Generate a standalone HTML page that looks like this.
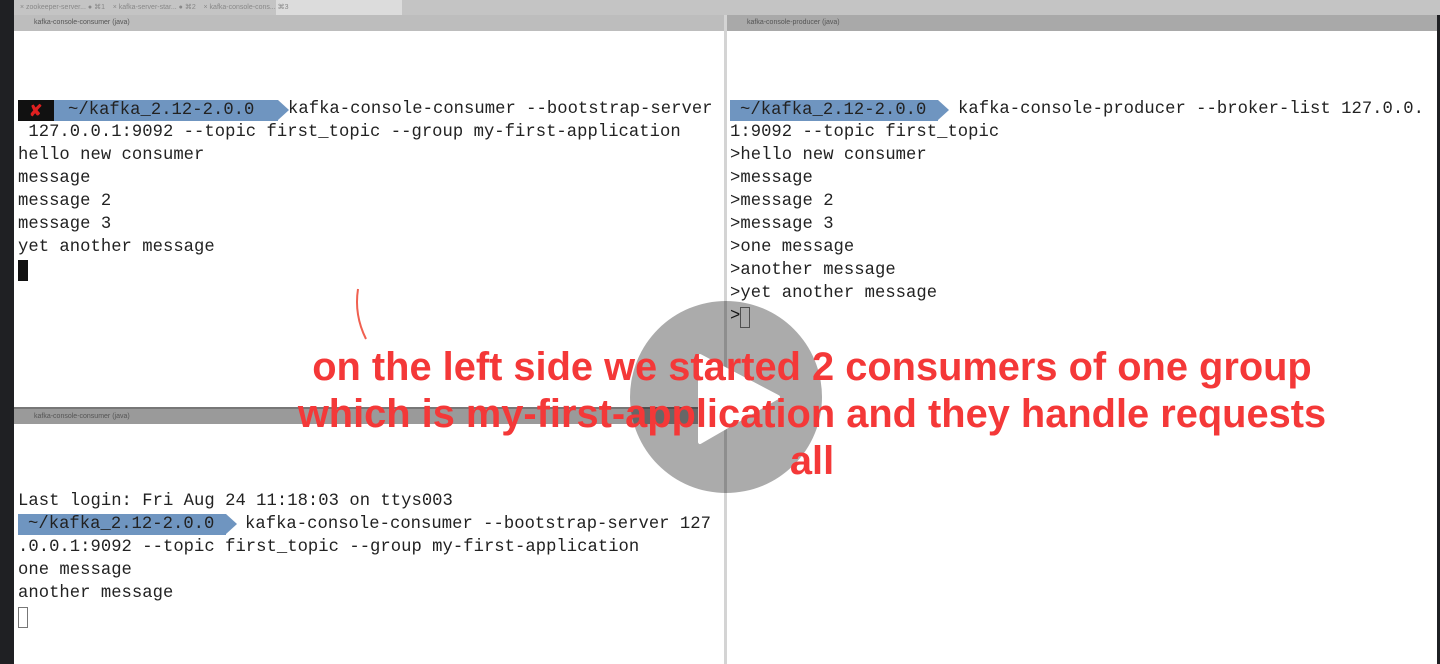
<!DOCTYPE html>
<html><head><style>
body{margin:0;width:1440px;height:664px;overflow:hidden;background:#1f2023;position:relative;font-family:"Liberation Mono",monospace}
.abs{position:absolute}
.pane{position:absolute;background:#fff}
.t{position:absolute;font-size:17.2px;color:#222;white-space:pre;line-height:23px;letter-spacing:0.04px}
.hdr{position:absolute;height:16px;font:7px "Liberation Sans",sans-serif;color:#555;line-height:16px;padding-left:20px;box-sizing:border-box}
.pr{position:absolute;height:21px;background:#6f95c0;color:#222;font-size:17.2px;line-height:21px;white-space:pre;letter-spacing:0.04px}
.pr:after{content:"";position:absolute;right:-11px;top:0;border-left:11px solid #6f95c0;border-top:10.5px solid transparent;border-bottom:10.5px solid transparent}
.red{position:absolute;font:bold 39.8px "Liberation Sans",sans-serif;color:#f43838;white-space:nowrap;text-align:center;width:1200px;left:212px}
</style></head><body>
<div class="abs" style="left:14px;top:0;width:1426px;height:15px;background:#c4c4c4"></div>
<div class="abs" style="left:276px;top:0;width:126px;height:15px;background:#dcdcdc"></div>
<div class="abs" style="left:20px;top:3px;font:7px 'Liberation Sans',sans-serif;color:#888">× zookeeper-server...  ● ⌘1 &nbsp;&nbsp;&nbsp;× kafka-server-star...  ● ⌘2 &nbsp;&nbsp;&nbsp;× kafka-console-cons... ⌘3</div>
<div class="hdr" style="left:14px;top:15px;width:711px;background:#bdbdbd">kafka-console-consumer (java)</div>
<div class="hdr" style="left:727px;top:15px;width:710px;background:#a9a9a9">kafka-console-producer (java)</div>
<div class="pane" style="left:14px;top:31px;width:710px;height:376px"></div>
<div class="pane" style="left:727px;top:31px;width:710px;height:633px"></div>
<div class="abs" style="left:724px;top:15px;width:3px;height:649px;background:#d4d4d4"></div>
<div class="hdr" style="left:14px;top:407px;width:710px;height:17px;background:#9a9a9a;border-top:2px solid #777">kafka-console-consumer (java)</div>
<div class="pane" style="left:14px;top:424px;width:710px;height:240px"></div>

<div class="abs" style="left:18px;top:100px;width:36px;height:21px;background:#111"></div>
<div class="abs" style="left:29px;top:101px;color:#e02020;font:bold 16px 'Liberation Sans',sans-serif">✘</div>
<div class="pr" style="left:54px;top:100px;width:210px;padding-left:14px">~/kafka_2.12-2.0.0</div>
<div class="t" style="left:288px;top:98px">kafka-console-consumer --bootstrap-server</div>
<div class="t" style="left:18px;top:121px"> 127.0.0.1:9092 --topic first_topic --group my-first-application
hello new consumer
message
message 2
message 3
yet another message</div>
<div class="abs" style="left:18px;top:260px;width:10px;height:21px;background:#111"></div>

<div class="pr" style="left:730px;top:100px;width:198px;padding-left:10px">~/kafka_2.12-2.0.0</div>
<div class="t" style="left:958px;top:98px">kafka-console-producer --broker-list 127.0.0.</div>
<div class="t" style="left:730px;top:121px">1:9092 --topic first_topic
>hello new consumer
>message
>message 2
>message 3
>one message
>another message
>yet another message
></div>
<div class="abs" style="left:740px;top:307px;width:8px;height:19px;border:1px solid #777"></div>

<div class="t" style="left:18px;top:490px">Last login: Fri Aug 24 11:18:03 on ttys003</div>
<div class="pr" style="left:18px;top:514px;width:198px;padding-left:10px">~/kafka_2.12-2.0.0</div>
<div class="t" style="left:245px;top:513px">kafka-console-consumer --bootstrap-server 127</div>
<div class="t" style="left:18px;top:536px">.0.0.1:9092 --topic first_topic --group my-first-application
one message
another message</div>
<div class="abs" style="left:18px;top:607px;width:8px;height:19px;border:1px solid #777"></div>

<svg class="abs" style="left:350px;top:285px" width="20" height="60"><path d="M8 4 Q4 30 16 54" stroke="#f06050" stroke-width="2" fill="none"/></svg>

<svg class="abs" style="left:628px;top:300px" width="196" height="196"><circle cx="98" cy="97" r="96" fill="rgba(0,0,0,0.33)"/><path d="M72 56 L150 97 L72 142 Z" fill="#fff" stroke="#fff" stroke-width="4" stroke-linejoin="round"/></svg>

<div class="red" style="top:345px">on the left side we started 2 consumers of one group</div>
<div class="red" style="top:392px">which is my-first-application and they handle requests</div>
<div class="red" style="top:439px">all</div>
</body></html>
